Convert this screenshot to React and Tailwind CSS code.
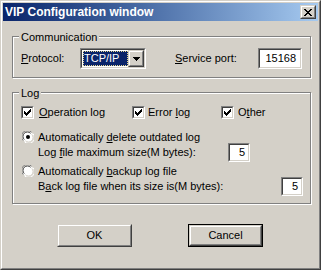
const Sunken = ({ className = "", inner = "", children }) => (
  <div className={`border border-t-[#808080] border-l-[#808080] border-b-white border-r-white ${className}`}>
    <div className={`h-full w-full border border-t-[#404040] border-l-[#404040] border-b-[#d4d0c8] border-r-[#d4d0c8] bg-white ${inner}`}>
      {children}
    </div>
  </div>
);

const Raised = ({ className = "", children }) => (
  <div className={`border border-t-[#d4d0c8] border-l-[#d4d0c8] border-b-[#404040] border-r-[#404040] ${className}`}>
    <div className="flex h-full w-full items-center justify-center border border-t-white border-l-white border-b-[#808080] border-r-[#808080] bg-[#d4d0c8]">
      {children}
    </div>
  </div>
);

const Group = ({ title, className = "", children }) => (
  <div className={`relative ml-[9px] w-[299px] border border-[#808080] shadow-[inset_1px_1px_0_#fff,1px_1px_0_#fff] ${className}`}>
    <span className="absolute -top-[7px] left-[6px] bg-[#d4d0c8] px-[2px] leading-[14px]">{title}</span>
    {children}
  </div>
);

// classic 7x7 check glyph
const Check = () => (
  <Sunken className="h-[13px] w-[13px]">
    <svg width="9" height="9" viewBox="0 0 9 9" className="block" shapeRendering="crispEdges">
      <path d="M7 1h1v3H7v1H6v1H5v1H4v1H3V7H2V6H1V3h1v1h1v1h1V4h1V3h1V2h1z" fill="#000" />
    </svg>
  </Sunken>
);

const Radio = ({ on }) => (
  <svg width="12" height="12" viewBox="0 0 12 12" className="block">
    <circle cx="6" cy="6" r="5.5" fill="#fff" />
    <path d="M1.2 9.5A5.5 5.5 0 0 1 9.5 1.2" fill="none" stroke="#808080" strokeWidth="1" />
    <path d="M2.3 8.6A4.2 4.2 0 0 1 8.6 2.3" fill="none" stroke="#404040" strokeWidth="1" />
    <path d="M10.8 2.5A5.5 5.5 0 0 1 2.5 10.8" fill="none" stroke="#ffffff" strokeWidth="1" />
    <path d="M9.7 3.4A4.2 4.2 0 0 1 3.4 9.7" fill="none" stroke="#d4d0c8" strokeWidth="1" />
    {on && <circle cx="6" cy="6" r="2" fill="#000" />}
  </svg>
);

const NumBox = ({ value }) => (
  <Sunken className="h-[19px] w-[22px]" inner="flex items-center justify-end pr-[3px]">
    {value}
  </Sunken>
);

export default function App() {
  return (
    <div className="h-[270px] w-[321px] border border-t-[#d4d0c8] border-l-[#d4d0c8] border-b-[#404040] border-r-[#404040] font-['Liberation_Sans',Arial,sans-serif] text-[11px] text-black">
      <div className="h-full w-full border border-t-white border-l-white border-b-[#808080] border-r-[#808080] bg-[#d4d0c8] p-[1px]">
        <div className="flex h-[18px] items-center justify-between bg-gradient-to-r from-[#0a246a] to-[#a6caf0] pl-[2px] pr-[2px]">
          <span className="text-[12px] font-bold text-white">VIP Configuration window</span>
          <Raised className="h-[14px] w-[16px]">
            <svg width="8" height="7" viewBox="0 0 8 7" shapeRendering="crispEdges">
              <path d="M0 0h2v1h1v1h2V1h1V0h2v1H7v1H6v1H5v1h1v1h1v1h1v1H6V6H5V5H3v1H2v1H0V6h1V5h1V4h1V3H2V2H1V1H0z" fill="#000" />
            </svg>
          </Raised>
        </div>

        <Group title="Communication" className="mt-[15px] h-[42px]">
          <div className="flex items-center pl-[8px] pt-[11px]">
            <span className="w-[59px]"><span className="underline">P</span>rotocol:</span>
            <Sunken className="h-[21px] w-[66px]" inner="flex items-center pl-[1px]">
              <div className="flex h-[15px] w-[46px] items-center bg-[#0a246a] pl-[1px] text-white outline-1 -outline-offset-1 outline-dotted outline-[#e8d890]">
                TCP/IP
              </div>
              <Raised className="ml-auto h-[17px] w-[16px]">
                <svg width="7" height="4" viewBox="0 0 7 4" shapeRendering="crispEdges">
                  <path d="M0 0h7v1H6v1H5v1H4v1H3V3H2V2H1V1H0z" fill="#000" />
                </svg>
              </Raised>
            </Sunken>
            <span className="ml-[29px] w-[83px]"><span className="underline">S</span>ervice port:</span>
            <Sunken className="h-[21px] w-[44px]" inner="flex items-center justify-end pr-[4px]">
              15168
            </Sunken>
          </div>
        </Group>

        <Group title="Log" className="mt-[14px] h-[112px]">
          <div className="mt-[13px] flex h-[13px] items-center pl-[8px]">
            <Check />
            <span className="ml-[5px] w-[93px]"><span className="underline">O</span>peration log</span>
            <Check />
            <span className="ml-[3px] w-[73px]">Error <span className="underline">l</span>og</span>
            <Check />
            <span className="ml-[4px]">O<span className="underline">t</span>her</span>
          </div>
          <div className="mt-[12px] flex h-[12px] items-center pl-[9px]">
            <Radio on />
            <span className="ml-[4px]">Automatically <span className="underline">d</span>elete outdated log</span>
          </div>
          <div className="flex h-[19px] items-center pl-[25px]">
            <span className="w-[190px]">Log <span className="underline">f</span>ile maximum size(M bytes):</span>
            <NumBox value="5" />
          </div>
          <div className="mt-[3px] flex h-[12px] items-center pl-[9px]">
            <Radio />
            <span className="ml-[4px]">Automatically <span className="underline">b</span>ackup log file</span>
          </div>
          <div className="flex h-[19px] items-center pl-[25px]">
            <span className="w-[243px]">B<span className="underline">a</span>ck log file when its size is(M bytes):</span>
            <NumBox value="5" />
          </div>
        </Group>

        <div className="mt-[20px] flex pl-[54px]">
          <Raised className="h-[23px] w-[75px]">OK</Raised>
          <div className="ml-[56px] h-[23px] w-[75px] border border-black">
            <Raised className="h-full w-full">Cancel</Raised>
          </div>
        </div>
      </div>
    </div>
  );
}
